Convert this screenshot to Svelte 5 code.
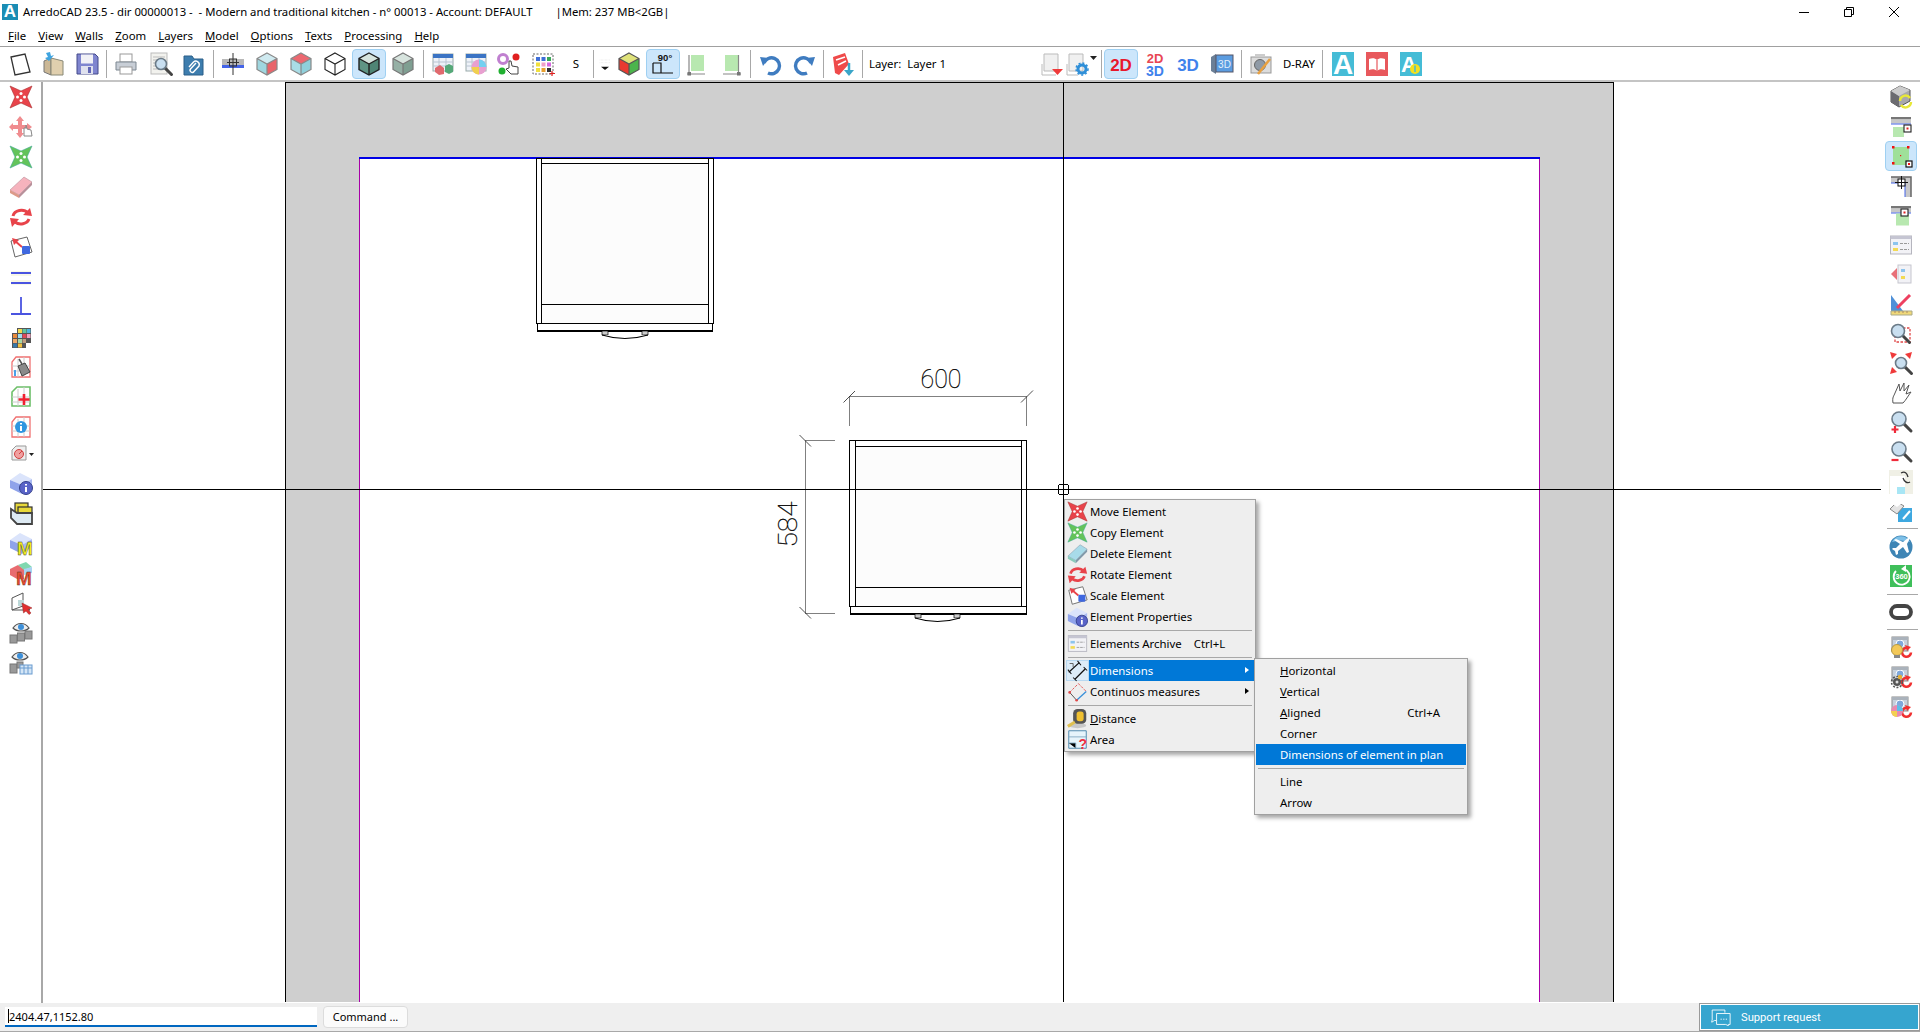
<script>
	// shared little drawings, icons are all on a 24x24 box
	const star = (c, e) =>
		`<path fill="${c}" stroke="${e}" stroke-width=".6" d="M1 1L12 6L23 1L18 12L23 23L12 18L1 23L6 12Z"/><g fill="#fff"><circle cx="12" cy="8.500" r="1.500"/><circle cx="12" cy="15.500" r="1.500"/><circle cx="8.500" cy="12" r="1.500"/><circle cx="15.500" cy="12" r="1.500"/></g>`;
	const cube = (t, l, r, e = '#666', w = 1) =>
		`<path fill="${t}" d="M12 1L22 6.500L12 12L2 6.500Z"/><path fill="${l}" d="M2 6.500L12 12V23L2 17.500Z"/><path fill="${r}" d="M22 6.500L12 12V23L22 17.500Z"/><path fill="none" stroke="${e}" stroke-width="${w}" d="M12 1L22 6.500V17.500L12 23L2 17.500V6.500ZM2 6.500L12 12L22 6.500M12 12V23"/>`;
	const isoBox = `<path fill="#dbe4fb" d="M1 9L11 2L23 8L13 14Z"/><path fill="#8fa3ea" d="M1 9L13 14V23L1 17Z"/><path fill="#a9b9f2" d="M23 8L13 14V23L23 16Z"/>`;
	const mag = (x = 10, y = 10, r = 7) =>
		`<path stroke="#444" stroke-width="3" stroke-linecap="round" d="M${x + r * 0.7} ${y + r * 0.7}L${x + r + 5} ${y + r + 5}"/><circle cx="${x}" cy="${y}" r="${r}" fill="#c9dff0" stroke="#6b7b88" stroke-width="1.600"/>`;
	const eraser = (a, b, c) =>
		`<path fill="${a}" stroke="${c}" stroke-width=".6" d="M1 15L15 2L23 7L10 20Z"/><path fill="${b}" d="M1 15L10 20V23L1 18Z"/><path fill="${c}" d="M10 20L23 7V10L10 23Z"/>`;
	const rotate = `<path fill="none" stroke="#e8434a" stroke-width="3" d="M4 11A8.500 7 0 0 1 19 8M20 14A8.500 7 0 0 1 6 17"/><path fill="#e8434a" d="M14 10L23 11L21 3ZM10 14L1 13L3 22Z"/>`;
	const scale = `<path fill="#fff" stroke="#666" d="M2 6L18 2L23 17L6 22Z"/><path stroke="#e8434a" stroke-width="2" d="M6 6L13 12"/><path fill="#e8434a" d="M3 3L10 5L5 10Z"/><rect x="13" y="11" width="8" height="8" fill="#3f68e0" rx="1"/>`;
	const sheet = (e) => `<path fill="#fff" stroke="${e}" stroke-width="1.300" d="M7 2H21V22H3V7Z"/><path stroke="#ccc" d="M3 11H21M3 16H21M9 4V22M15 2V22"/>`;
	const table = `<rect x="2" y="2" width="20" height="17" fill="#eef2f8" stroke="#9aa"/><rect x="2" y="2" width="20" height="4" fill="#3b74c4"/><path stroke="#b9c4d2" d="M2 10H22M2 14H22M8 6V19M15 6V19"/>`;
	const green = `<rect x="6" y="3" width="13" height="16" fill="#b8e8b0"/>`;
	const tile = (c, body) => `<rect x="1" y="0" width="22" height="24" fill="${c}"/>${body}`;
	const book = `<path fill="#fff" d="M4 7c3-1 6-1 8 1c2-2 5-2 8-1v11c-3-1-6-1-8 1c-2-2-5-2-8-1Z"/><path stroke="#e8585c" stroke-width="1.200" d="M12 8v11"/>`;
	const wall = `<rect x="2" y="3" width="20" height="2.500" fill="#777"/><rect x="2" y="5.500" width="20" height="4" fill="#c8c8c8"/><rect x="2" y="9.500" width="20" height="1" fill="#4464e8"/>`;
	const boxRefresh = `<rect x="3" y="2" width="16" height="14" fill="#c6d0dc" stroke="#8a8a8a"/><circle cx="11" cy="9" r="4" fill="#7fa8dc" stroke="#fff"/><rect x="3" y="2" width="16" height="3" fill="#aab2bb"/><path fill="none" stroke="#f03030" stroke-width="2.600" d="M22 17.500A4.500 4.500 0 1 1 19 13"/><path fill="#f03030" d="M16 10L22 12L18 16Z"/>`;
	const txt = (x, y, s, c, t, w = 700, extra = '') =>
		`<text x="${x}" y="${y}" font-size="${s}" fill="${c}" font-weight="${w}" font-family="Liberation Sans, sans-serif" text-anchor="middle" ${extra}>${t}</text>`;

	const icons = {
		move: star('#e8434a', '#a33'),
		moveHand: `<path fill="#ee8083" d="M11 1L15 6H13V10H18V8L23 12L18 16V14H13V18H15L11 23L7 18H9V14H4V16L0 12L4 8V10H9V6H7Z" opacity=".9"/><path fill="#fff" stroke="#888" d="M15 13V21L23 21L22 15L18 14L17 10V13Z"/>`,
		copy: star('#63c35a', '#4a9'),
		erase: eraser('#f6b3bd', '#d98', '#b8909a'),
		eraseBlue: eraser('#a8dbe9', '#8cb', '#7f98a8'),
		rotate,
		scale,
		parallel: `<rect x="2" y="6" width="20" height="5" fill="#f8f8e8"/><rect x="2" y="15" width="20" height="5" fill="#f8f8e8"/><path stroke="#4a54e0" stroke-width="1.800" d="M2 8H22M2 18H22"/>`,
		perp: `<path stroke="#4a54e0" stroke-width="1.800" d="M12 2V19M2 19H22"/>`,
		palette: `<path fill="#555" d="M8 3H22V18H17V23H3V8H8Z"/><rect x="9" y="4" width="4" height="4" fill="#f2d94e"/><rect x="13.500" y="4" width="4" height="4" fill="#62c4a0"/><rect x="18" y="4" width="3.500" height="4" fill="#4db4e0"/><rect x="4" y="9" width="4" height="4" fill="#e88a3c"/><rect x="9" y="9" width="4" height="4" fill="#9fdcf0"/><rect x="13.500" y="9" width="4" height="4" fill="#e04858"/><rect x="18" y="9" width="3.500" height="4" fill="#f0a0c0"/><rect x="4" y="14" width="4" height="4" fill="#f0a868"/><rect x="9" y="14" width="4" height="4" fill="#a8d8a8"/><rect x="13.500" y="14" width="3.500" height="4" fill="#c0a080"/><rect x="4" y="18.500" width="4" height="4" fill="#3878a8"/><rect x="9" y="18.500" width="4" height="4" fill="#f0c040"/>`,
		paint: `${sheet('#f07070')}<path fill="#8a8a8a" stroke="#444" d="M9 11L16 8L21 17L13 21Z"/><path stroke="#555" stroke-width="1.500" d="M13 9L10 4"/><path stroke="#4aa0e8" stroke-width="2" d="M6 15V21"/>`,
		addArea: `<path fill="#fff" stroke="#6cbf68" stroke-width="1.600" d="M8 2H21V21H3V7Z"/><path stroke="#ccc" d="M3 12H21M3 17H21M9 4V21M15 2V21"/><path stroke="#f02030" stroke-width="2.600" d="M15 9V20M9.500 14.500H20.500"/>`,
		infoArea: `${sheet('#f07070')}<circle cx="12" cy="12" r="6" fill="#2f96e0"/><path stroke="#fff" stroke-width="2" d="M12 11V16M12 8V9.500"/>`,
		stamp: `<path fill="#eee" stroke="#999" d="M7 3H17V17H3V7Z"/><circle cx="10" cy="11" r="4.500" fill="#f0a0a0" stroke="#d04040"/><path stroke="#d04040" d="M10 11L13 8"/><path fill="#222" d="M20 10H25L22.500 13Z"/>`,
		boxInfo: `${isoBox}<circle cx="17" cy="17" r="6.500" fill="#5964c8" stroke="#34408a"/><path stroke="#fff" stroke-width="2" d="M17 16V21M17 13V14.500"/>`,
		archive: `<rect x="6" y="2" width="13" height="10" fill="#e8d93a" stroke="#333" stroke-width="1.200"/><rect x="9" y="6" width="14" height="7" fill="#e8d93a" stroke="#333" stroke-width="1.200"/><path fill="#ddeaf3" stroke="#444" stroke-width="1.800" d="M8 12H23V23H8L2 17V8Z"/>`,
		boxM: `${isoBox}${txt(16, 24, 19, '#f0ec20', 'M', 800, 'stroke="#333" stroke-width=".4"')}`,
		multiM: `<path fill="#e86c70" d="M1 8L9 4L15 8V18H8L1 14Z"/><path fill="#7fd8b0" d="M9 4L17 1L23 6L15 9Z"/><path fill="#a9d3f2" d="M15 8L23 6V12L15 14Z"/>${txt(15, 24, 19, '#e8492c', 'M', 800, 'stroke="#333" stroke-width=".3"')}`,
		cursorBox: `<path fill="none" stroke="#555" d="M3 7L14 2V15L3 19ZM14 15L21 19H3"/><rect x="9" y="9" width="6" height="6" fill="#bcd8d8"/><path fill="#e03030" stroke="#922" stroke-width=".5" d="M13 12L23 17L19 18.500L22 22L20 23.500L17 20L14.500 22Z"/>`,
		eye1: `<path fill="#eee" stroke="#555" stroke-width="1.200" d="M4 7C8 1 16 1 20 7C16 11 8 11 4 7Z"/><circle cx="12" cy="6" r="3" fill="#3d8fd8"/><g fill="#999" stroke="#777"><rect x="1" y="14" width="7" height="8"/><rect x="8.500" y="12" width="7" height="8"/><rect x="16" y="10" width="7" height="8"/></g>`,
		eye2: `<path fill="#eee" stroke="#555" stroke-width="1.200" d="M3 6C7 0 15 0 19 6C15 10 7 10 3 6Z"/><circle cx="11" cy="5" r="3" fill="#3d8fd8"/><g fill="#999" stroke="#777"><rect x="1" y="13" width="7" height="9"/><rect x="8" y="11" width="6" height="6"/></g><rect x="11" y="14" width="12" height="9" fill="#d5e6f6" stroke="#6a9cd0"/><path stroke="#6a9cd0" d="M11 17H23M15 14V23M19 14V23"/>`,

		newDoc: `<path fill="#fff" stroke="#333" stroke-width="1.300" d="M3 5L17 2L22 20L7 23Z"/>`,
		open: `<path fill="#cbb896" stroke="#777" d="M3 9L10 6V23L3 20Z"/><path fill="#e0cfae" stroke="#887" d="M10 6L22 9V23L10 23Z"/><path fill="#3fa4e0" d="M8 9L4 6L7 5L5 1L9 0L10 4L13 3Z"/>`,
		save: `<path fill="#7f85cf" stroke="#454a8a" d="M2 2H20L23 5V22H2Z"/><rect x="6" y="2.500" width="12" height="9" fill="#f1f1f6"/><rect x="6" y="14" width="12" height="8" fill="#dfe1ee"/><rect x="13" y="15" width="3" height="6" fill="#6166b5"/>`,
		print: `<rect x="6" y="2" width="12" height="8" fill="#fff" stroke="#999"/><path fill="#c8ced6" stroke="#7d8791" d="M2 10H22V18H2Z"/><rect x="6" y="15" width="12" height="7" fill="#fff" stroke="#999"/>`,
		preview: `<rect x="3" y="1" width="16" height="21" fill="#f2f2ee" stroke="#bbb"/><path stroke="#bbb" d="M5 5H17M5 8H17M5 11H12M5 14H11M5 17H11"/>${mag(13, 12, 5.500)}`,
		attach: `<path fill="#3d7dae" stroke="#2b5f88" d="M3 4H11L13 7H22V23H3Z"/><path fill="none" stroke="#fff" stroke-width="1.400" d="M15 11L9.500 17A2 2 0 0 0 13 19.500L18 14A3.500 3.500 0 0 0 12.500 10L8 15"/>`,
		wallSnap: `<rect x="1" y="7" width="22" height="6" fill="#b8b8b8"/><rect x="1" y="13" width="22" height="3" fill="#4464e8"/><path stroke="#333" d="M12 1V23M6 10.500H18"/><rect x="8.500" y="7" width="7" height="7" fill="none" stroke="#333"/>`,
		cubeRed: cube('#cfeaf0', '#9fd6df', '#e8646a', '#888', 1.200),
		cubeRedTop: cube('#ec6870', '#a9dde6', '#8fd0db', '#888', 1.200),
		cubeWire: cube('#fff', '#fff', '#fff', '#222', 1.100),
		cubeGreen: cube('#d7e4de', '#5f9484', '#4f8575', '#222', 1.400),
		cubeGreen2: cube('#d7e4de', '#95b0a5', '#7f9f92', '#777', 1.200),
		table1: `${table}<path fill="#e0696e" d="M4 16L9 13L13 16V22L8 23L4 20Z"/><path fill="#55a878" d="M14 14L18 12L22 14V20L18 22L14 20Z"/>`,
		tableColor: `${table}<circle cx="15" cy="15" r="7.500" fill="#e8a0d0"/><path fill="#74d0f0" d="M15 15V7.500A7.500 7.500 0 0 1 22.500 15Z"/><path fill="#f0d050" d="M15 15H7.500A7.500 7.500 0 0 0 15 22.500Z"/>`,
		hand: `<circle cx="6" cy="7" r="4.500" fill="none" stroke="#c080d0" stroke-width="3"/><circle cx="19" cy="5" r="3.500" fill="#e02020"/><circle cx="5" cy="19" r="3.500" fill="#20b030"/><path fill="#fff" stroke="#444" d="M12 9L14 9L15 14L21 15L21 22H14L9 17L12 16Z"/>`,
		dots: `<rect x="2" y="2" width="20" height="20" fill="none" stroke="#666" stroke-dasharray="2 1.500"/><g><rect x="5" y="5" width="4" height="4" fill="#3f6fd8"/><rect x="10.500" y="5" width="4" height="4" fill="#3f6fd8"/><rect x="16" y="5" width="4" height="4" fill="#38a858"/><rect x="5" y="10.500" width="4" height="4" fill="#f0e040"/><rect x="10.500" y="10.500" width="4" height="4" fill="#f0a0c8"/><rect x="16" y="10.500" width="4" height="4" fill="#d868e0"/><rect x="5" y="16" width="4" height="4" fill="#f0e040"/><rect x="10.500" y="16" width="4" height="4" fill="#e8a030"/><rect x="16" y="16" width="4" height="4" fill="#333"/></g><path stroke="#e02020" stroke-width="1.200" d="M21 19V24M18.500 21.500H24"/>`,
		sLetter: `<text x="12" y="16" font-size="11.500" text-anchor="middle" font-family="Noto Sans, sans-serif" fill="#000">S</text>`,
		drop: `<path stroke="#ddd" stroke-dasharray="1 1" d="M4 6H20M4 10H20"/><path fill="#111" d="M6 16H18L12 21Z"/>`,
		cube3: cube('#dfe27a', '#e83a30', '#4cb54c', '#555', 1.200),
		angle: `${txt(14, 9, 9.500, '#111', '90°', 800)}<path fill="none" stroke="#111" stroke-width="1.200" d="M2 11H10V21M2 11V21H22"/>`,
		greenL: `${green}<path stroke="#888" stroke-width="1.200" d="M2 22H20M4 3V22"/><rect x="2.500" y="20" width="3.500" height="3.500" fill="#777"/>`,
		greenR: `${green}<path stroke="#888" stroke-width="1.200" d="M4 22H22M19.500 3V22"/><rect x="18" y="20" width="3.500" height="3.500" fill="#777"/>`,
		undo: `<path fill="none" stroke="#3f7cc0" stroke-width="3.400" d="M5 11A8 8 0 1 1 9 21"/><path fill="#3f7cc0" d="M1 5L10 6L4 14Z"/>`,
		redo: `<path fill="none" stroke="#3f7cc0" stroke-width="3.400" d="M19 11A8 8 0 1 0 15 21"/><path fill="#3f7cc0" d="M23 5L14 6L20 14Z"/>`,
		redExport: `<path fill="#ef4a4a" d="M2 5L14 1L18 12L8 23L4 21Z"/><path stroke="#fff" stroke-width="1.500" d="M5 8L14 5M7 13L15 9"/><path stroke="#3aa5c8" stroke-width="2.500" d="M18 11V19"/><path fill="#3aa5c8" d="M13 18H23L18 24Z"/>`,
		layerA: `<path fill="#f0f0f0" stroke="#bbb" d="M3 2H17V19H3Z"/><path fill="none" stroke="#bbb" d="M1 12V23H15"/><path fill="#ef3a3a" d="M11 17H22L16.500 23Z"/>`,
		layerB: `<path fill="#f0f0f0" stroke="#bbb" d="M3 2H17V19H3Z"/><path fill="none" stroke="#bbb" d="M1 12V23H12"/><circle cx="16" cy="17" r="4" fill="none" stroke="#2f8fd8" stroke-width="3"/><circle cx="16" cy="17" r="6" fill="none" stroke="#2f8fd8" stroke-width="1.500" stroke-dasharray="2 2"/>`,
		caret: `<path fill="#222" d="M8 4H15L11.500 8Z"/>`,
		d2: txt(12, 18.500, 17, '#e8182c', '2D', 700),
		d23: `${txt(12, 11, 13, '#e84654', '2D', 700)}${txt(12, 23.500, 14, '#3f82ec', '3D', 700)}`,
		d3: txt(12, 18.500, 17, '#3f82ec', '3D', 700),
		screen3: `<path fill="#6b7f96" d="M1 5L6 2V22L1 19Z"/><rect x="6" y="3" width="17" height="17" fill="#5b9ce0" stroke="#556"/>${txt(14.500, 16, 10, '#e4f0fb', '3D', 400)}`,
		camera: `<rect x="2" y="5" width="20" height="16" fill="#dcdcdc" stroke="#999"/><rect x="6" y="2" width="10" height="3" fill="#ccc"/><circle cx="11" cy="13" r="5.500" fill="#8f9aa6" stroke="#666"/><path stroke="#e8a040" stroke-width="2.500" d="M9 22L21 7"/>`,
		logoA: tile('#45bcd6', txt(12, 22, 28, '#fff', 'A', 800)),
		logoBook: tile('#e8585c', book),
		logoUp: tile('#45bcd6', `${txt(10, 20, 22, '#fff', 'A', 800)}<circle cx="16" cy="17" r="5" fill="#f3e020"/><path stroke="#45bcd6" stroke-width="1.500" d="M16 13.500V20"/>`),

		cubeSync: `<path fill="#a8a8ac" stroke="#555" d="M11 1L21 5V16L10 22L2 17V6Z"/><path fill="#6b6b70" d="M2 6L10 11V22L2 17Z"/><path fill="#ccc" d="M11 1L21 5L10 11L2 6Z"/><path fill="none" stroke="#e8e838" stroke-width="2.500" d="M11 16A5.500 5.500 0 0 1 21 13M22 17A5.500 5.500 0 0 1 12 20"/>`,
		wallBox1: `${wall}<rect x="4" y="13" width="11" height="10" fill="#b8e8b0"/><rect x="15" y="11" width="7" height="7" fill="#fff" stroke="#222" stroke-width="1.100"/><rect x="17.500" y="13.500" width="2" height="2" fill="#e02020"/>`,
		boxSel: `<rect x="4" y="3" width="16" height="18" fill="#9fe099"/><g fill="#f01010"><rect x="3" y="2" width="2.500" height="2.500"/><rect x="18" y="2" width="2.500" height="2.500"/><rect x="3" y="18" width="2.500" height="2.500"/><rect x="11" y="11" width="1.200" height="1.200"/></g><rect x="17" y="17" width="6" height="6" fill="#fff" stroke="#111" stroke-width="1.200"/><rect x="19" y="19" width="2" height="2" fill="#f01010"/>`,
		wallCorner: `<path fill="#c8c8c8" d="M2 3H22V23H16V9H2Z"/><path fill="none" stroke="#666" stroke-width="1.500" d="M2 3H22V23"/><path fill="none" stroke="#4464e8" d="M2 9H16V23"/><rect x="9" y="5" width="7" height="7" fill="#fff" stroke="#111"/><path stroke="#111" d="M12.500 2V15M6 8.500H19"/>`,
		wallBox2: `${wall}<rect x="7" y="10.500" width="13" height="12" fill="#b8e8b0"/><rect x="12" y="6" width="7" height="7" fill="#fff" stroke="#222" stroke-width="1.100"/><rect x="14.500" y="8.500" width="2" height="2" fill="#e02020"/>`,
		list: `<rect x="1.500" y="3" width="21" height="18" fill="#f2f2f6" stroke="#b5b5be"/><rect x="1.500" y="3" width="21" height="3" fill="#c5c5d2"/><rect x="4" y="9" width="5" height="3" fill="#8cc4ee"/><rect x="4" y="15" width="5" height="3" fill="#f3da55"/><path stroke="#999" stroke-dasharray="3 1" d="M11 10.500H20M11 16.500H20"/>`,
		listArrow: `<rect x="9" y="3" width="13" height="18" fill="#f2f2f6" stroke="#c5c5ce"/><rect x="12" y="7" width="4" height="3" fill="#8cc4ee"/><rect x="12" y="14" width="4" height="3" fill="#f3da55"/><path fill="#e87078" d="M8 6V18L2 12Z"/>`,
		ruler: `<path fill="#4f90d8" d="M2 3L14 19H2Z"/><path fill="#f0d878" stroke="#aa8" d="M2 19H23V23H2Z"/><path stroke="#a86" d="M6 19V21M10 19V21M14 19V21M18 19V21"/><path stroke="#ee4060" stroke-width="3" d="M8 16L21 3"/>`,
		zoomWin: `<rect x="6" y="6" width="15" height="14" fill="none" stroke="#e04848" stroke-dasharray="2.500 1.500" stroke-width="1.300"/>${mag(9, 9, 6.500)}`,
		zoomFit: `${mag(12, 12, 5.500)}<g fill="#ef3a3a"><path d="M1 1L8 3L3 8Z"/><path d="M23 1L16 3L21 8Z"/><path d="M1 23L3 16L8 21Z"/></g>`,
		handOut: `<path fill="#fff" stroke="#555" d="M4 22C3 16 5 15 6 12L10 3L11 10L15 2L15 10L20 4L17 13L22 11C19 15 17 19 14 22Z"/>`,
		zoomIn: `${mag(10, 9, 7)}<path stroke="#ef2a3a" stroke-width="2.200" d="M6 16V23M2.500 19.500H9.500"/>`,
		zoomOut: `${mag(10, 9, 7)}<path stroke="#ef2a3a" stroke-width="2.200" d="M2.500 20H9.500"/>`,
		pageFlip: `<rect x="0" y="0" width="24" height="24" fill="#f0f0e6"/><path fill="#fff" d="M1 6H16V24H1Z"/><rect x="8" y="17" width="8" height="7" fill="#a8e6f5"/><path fill="none" stroke="#333" stroke-width="1.300" d="M12 3C16 1 18 3 19 7M21 12C18 14 15 11 14 8"/>`,
		printEdit: `<rect x="9" y="9" width="14" height="14" fill="#3ea8e0"/><path fill="#e4e4e4" stroke="#888" d="M1 10L8 3L15 7L8 15Z"/><path fill="#fff" d="M4 5L9 1L13 4L8 8Z"/><path stroke="#fff" stroke-width="2" d="M14 20L21 12"/>`,
		plane: `<circle cx="12" cy="12" r="11.500" fill="#3e85b5"/><path fill="#7ec0e8" d="M3 7A10 10 0 0 1 21 7C15 5 9 5 3 7Z"/><path fill="#fff" d="M21 3L18 9L20 17L18 18L14 12L9 16L9 19L7 20L6 16L3 14L4 13L7 13L11 9L5 5L7 4L14 7L19 3Z"/>`,
		p360: `<rect x="1" y="1" width="22" height="22" fill="#3fbf5a"/><path fill="none" stroke="#fff" stroke-width="1.800" d="M7 7A8 8 0 1 0 15 5"/><path fill="#fff" d="M12 5L17 1V8Z"/>${txt(12.500, 15, 7.500, '#fff', '360', 800)}`,
		oval: `<rect x="2" y="6" width="20" height="12" rx="6" fill="none" stroke="#444" stroke-width="3.800"/>`,
		bulb: `${boxRefresh}<circle cx="8" cy="15" r="5.500" fill="#f3c858" stroke="#b89a40"/><rect x="5" y="20" width="6" height="3" fill="#888"/>`,
		gear: `${boxRefresh}<circle cx="8" cy="17" r="4" fill="#555"/><circle cx="8" cy="17" r="5.500" fill="none" stroke="#555" stroke-width="1.500" stroke-dasharray="2 1.500"/><circle cx="8" cy="17" r="1.500" fill="#ddd"/><circle cx="11" cy="12" r="2.200" fill="#e8b030"/>`,
		wheel: `${boxRefresh}<circle cx="8" cy="16" r="6" fill="#e88ab0"/><path fill="#5cc0e8" d="M8 16V10A6 6 0 0 1 14 16Z"/><path fill="#f3d050" d="M8 16H2A6 6 0 0 0 8 22Z"/>`,

		dims: `<path stroke="#111" stroke-width="1.400" d="M2 14L14 3M9 22L21 10"/><path stroke="#111" stroke-width="1.200" d="M1 11L5 16M12 1L16 6M7 20L11 24M19 8L23 12"/><path fill="none" stroke="#555" d="M3 4L7 4L7 8"/>`,
		cont: `<path fill="none" stroke="#e04848" stroke-dasharray="3 1.500" d="M3 13L13 3M13 3L22 12"/><path stroke="#444" d="M3 13L11 22"/><path fill="none" stroke="#3a90d8" stroke-width="1.500" d="M11 22L22 12"/><circle cx="3" cy="13" r="1.500" fill="#e04848"/><circle cx="11" cy="22" r="1.500" fill="#e04848"/>`,
		tape: `<ellipse cx="12" cy="20" rx="10" ry="3" fill="#c8c8c8"/><rect x="7" y="1" width="15" height="17" rx="5" fill="#555"/><rect x="11" y="4" width="8" height="11" rx="3" fill="#f0c030"/><path stroke="#e0c050" stroke-width="3.500" d="M1 21L9 16"/>`,
		areaQ: `<path fill="#e6f4fb" stroke="#3f7fa8" d="M2 2H22V22H2Z"/><path stroke="#7fa8c0" d="M2 9H22M2 16H10V22"/>${txt(18, 23, 16, '#ee3040', '?', 800)}`
	};

	// toolbar rows, w = slot width
	const toolbar = [
		{ w: 33.5, items: ['newDoc', 'open', 'save'] },
		{ w: 33.5, items: ['print', 'preview', 'attach'] },
		{ w: 34, items: ['wallSnap', 'cubeRed', 'cubeRedTop', 'cubeWire', { i: 'cubeGreen', on: true }, 'cubeGreen2'] },
		{ w: 33.4, items: ['table1', 'tableColor', 'hand', 'dots', 'sLetter'] }
	];
	const toolbar2 = [
		{ w: 34, items: ['cube3', { i: 'angle', on: true }, 'greenL', 'greenR'] },
		{ w: 33.5, items: ['undo', 'redo'] },
		{ w: 33, items: ['redExport'] }
	];
	const toolbar3 = [
		{ w: 33.5, items: [{ i: 'd2', on: true }, 'd23', 'd3', 'screen3'] },
		{ w: 33.5, items: ['camera'] }
	];
	const logos = ['logoA', 'logoBook', 'logoUp'];

	const leftTools = ['move', 'moveHand', 'copy', 'erase', 'rotate', 'scale', 'parallel', 'perp', 'palette', 'paint', 'addArea', 'infoArea', 'stamp', 'boxInfo', 'archive', 'boxM', 'multiM', 'cursorBox', 'eye1', 'eye2'];
	const right1 = ['cubeSync', 'wallBox1', 'boxSel', 'wallCorner', 'wallBox2', 'list', 'listArrow', 'ruler', 'zoomWin', 'zoomFit', 'handOut', 'zoomIn', 'zoomOut', 'pageFlip', 'printEdit'];
	const right2 = ['plane', 'p360'];
	const right3 = ['oval'];
	const right4 = ['bulb', 'gear', 'wheel'];

	const menus = [
		['F', 'ile'], ['V', 'iew'], ['W', 'alls'], ['Z', 'oom'], ['L', 'ayers'], ['M', 'odel'], ['O', 'ptions'], ['T', 'exts'], ['P', 'rocessing'], ['H', 'elp']
	];

	const ctxMenu = [
		[{ i: 'move', t: 'Move Element' }, { i: 'copy', t: 'Copy Element' }, { i: 'eraseBlue', t: 'Delete Element' }, { i: 'rotate', t: 'Rotate Element' }, { i: 'scale', t: 'Scale Element' }, { i: 'boxInfo', t: 'Element Properties' }],
		[{ i: 'list', t: 'Elements Archive', key: 'Ctrl+L' }],
		[{ i: 'dims', t: 'Dimensions', sub: true, on: true }, { i: 'cont', t: 'Continuos measures', sub: true }],
		[{ i: 'tape', u: 'D', t: 'istance' }, { i: 'areaQ', t: 'Area' }]
	];
	const subMenu = [
		[{ u: 'H', t: 'orizontal' }, { u: 'V', t: 'ertical' }, { u: 'A', t: 'ligned', key: 'Ctrl+A' }, { t: 'Corner' }, { t: 'Dimensions of element in plan', on: true }],
		[{ t: 'Line' }, { t: 'Arrow' }]
	];

	// CAD drawing, coordinates are page pixels
	const cabinets = [
		{ x1: 536, x2: 713, s1: 541, s2: 708, top: 158, t2: 163, b1: 304, b2: 323, fx1: 537, fx2: 712, fy: 330, hx1: 602, hx2: 648 },
		{ x1: 849, x2: 1026, s1: 855, s2: 1021, top: 440, t2: 446, b1: 587, b2: 606, fx1: 850, fx2: 1026, fy: 613, hx1: 915, hx2: 960 }
	];
</script>

{#snippet icon(name)}
	<svg class="ico" viewBox="0 0 24 24" aria-hidden="true">{@html icons[name]}</svg>
{/snippet}

{#snippet tbGroups(groups)}
	{#each groups as g, n}
		{#if n > 0}<span class="vsep"></span>{/if}
		{#each g.items as it}
			<span class="slot" class:on={it.on} style="width: {g.w}px">
				{@render icon(it.i ?? it)}
			</span>
		{/each}
	{/each}
{/snippet}

{#snippet menuRows(groups, withIcons)}
	{#each groups as rows, n}
		{#if n > 0}<div class="msep"><span></span></div>{/if}
		{#each rows as r}
			<div class="mrow">
				{#if withIcons}<span class="micon" class:hot={r.on}>{@render icon(r.i)}</span>{/if}
				<span class="mtext" class:on={r.on}>
					<span class="mlabel">{#if r.u}<u>{r.u}</u>{/if}{r.t}</span>
					{#if r.key}<span class="mkey" class:right={!withIcons}>{r.key}</span>{/if}
					{#if r.sub}<span class="marrow" class:white={r.on}></span>{/if}
				</span>
			</div>
		{/each}
	{/each}
{/snippet}

<div class="app">
	<header class="titlebar">
		<span class="logo">A</span>
		<span class="title">ArredoCAD 23.5 - dir 00000013 -&nbsp; - Modern and traditional kitchen - n° 00013 - Account: DEFAULT</span>
		<span class="mem">|Mem: 237 MB&lt;2GB|</span>
		<div class="winctl">
			<svg viewBox="0 0 10 10"><path d="M0 5.500H10" stroke="#000" /></svg>
			<svg viewBox="0 0 10 10"><path d="M.5 2.500H7.500V9.500H.5ZM2.500 2.500V.5H9.500V7.500H7.500" fill="none" stroke="#000" /></svg>
			<svg viewBox="0 0 10 10"><path d="M0 0L10 10M10 0L0 10" stroke="#000" /></svg>
		</div>
	</header>

	<nav class="menubar">
		{#each menus as m}
			<span><u>{m[0]}</u>{m[1]}</span>
		{/each}
	</nav>

	<div class="toolbar">
		{@render tbGroups(toolbar)}
		<span class="vsep tight"></span>
		<span class="slot narrow">{@render icon('drop')}</span>
		{@render tbGroups(toolbar2)}
		<span class="vsep"></span>
		<span class="layer">Layer:&nbsp; Layer 1</span>
		<span class="slot small">{@render icon('layerA')}</span>
		<span class="slot small">{@render icon('layerB')}</span>
		<span class="slot tiny">{@render icon('caret')}</span>
		<span class="vsep"></span>
		{@render tbGroups(toolbar3)}
		<span class="dray">D-RAY</span>
		<span class="vsep"></span>
		{#each logos as l}
			<span class="slot logo-slot">{@render icon(l)}</span>
		{/each}
	</div>

	<main class="main">
		<aside class="lefttools">
			{#each leftTools as t}
				<span class="ltool" class:short={t === 'stamp'}>{@render icon(t)}</span>
			{/each}
		</aside>

		<section class="canvas">
			<svg class="drawing" viewBox="43 82 1838 920" aria-label="Plan view">
				<g shape-rendering="crispEdges">
					<rect x="285.500" y="82.500" width="1328" height="930" fill="#cfcfcf" stroke="#000" />
					<rect x="359" y="158" width="1180" height="860" fill="#fff" />
					<path d="M359.500 158V1002M1539.500 158V1002" stroke="#a800a8" />
					<rect x="359" y="157" width="1181" height="2" fill="#0000e6" />
				</g>

				{#each cabinets as c}
					<g shape-rendering="crispEdges" fill="none" stroke="#000">
						<rect x={c.s1} y={c.t2} width={c.s2 - c.s1} height={c.b2 - c.t2} fill="#fcfcfc" />
						<rect x={c.x1 + 0.5} y={c.top + 0.5} width={c.x2 - c.x1} height={c.b2 - c.top} />
						<path d="M{c.s1 + 0.5} {c.top}V{c.b2}M{c.s2 + 0.5} {c.top}V{c.b2}M{c.s1} {c.t2 + 0.5}H{c.s2}M{c.s1} {c.b1 + 0.5}H{c.s2}" />
						<rect x={c.fx1 + 0.5} y={c.b2 + 0.5} width={c.fx2 - c.fx1} height={c.fy - c.b2} fill="#fff" />
						<path d="M{c.fx1} {c.fy + 1}H{c.fx2 + 1}" />
					</g>
					<path d="M{c.hx1} {c.fy + 1}V{c.fy + 5}H{c.hx1 + 6}V{c.fy + 1}ZM{c.hx2} {c.fy + 1}V{c.fy + 5}H{c.hx2 - 6}V{c.fy + 1}Z" fill="#ccc" stroke="#000" stroke-width=".7" />
					<path d="M{c.hx1} {c.fy + 5}Q{(c.hx1 + c.hx2) / 2} {c.fy + 12} {c.hx2} {c.fy + 5}" fill="#fff" stroke="#000" stroke-width="1.100" />
				{/each}

				<g fill="none" stroke="#808080" shape-rendering="crispEdges">
					<path d="M849.500 396.500H1027M849.500 396V426M1026.500 396V426" />
					<path d="M805.500 440V613.500M805 440.500H835M805 613.500H835" />
				</g>
				<path d="M843.500 402.500L855 391M1021 402.500L1033 390.500M799.500 435L811 446.500M799.500 607L811 618.500" stroke="#222" stroke-width=".8" />
				<text class="dim" x="920.500" y="388" textLength="41" lengthAdjust="spacingAndGlyphs">600</text>
				<text class="dim" transform="translate(796.500 547.500) rotate(-90)" x="0" y="0" textLength="46" lengthAdjust="spacingAndGlyphs">584</text>

				<g shape-rendering="crispEdges" stroke="#000">
					<path d="M43 489.500H1881M1063.500 82V1002" />
					<rect x="1058.500" y="484.500" width="10" height="10" rx="2" fill="#fff" />
					<path d="M1058 489.500H1069M1063.500 484V495" />
				</g>
			</svg>

			<div class="ctx">
				<div class="popup main-pop">{@render menuRows(ctxMenu, true)}</div>
				<div class="popup sub-pop">{@render menuRows(subMenu, false)}</div>
			</div>
		</section>

		<aside class="righttools">
			<div class="rgroup">
				{#each right1 as t}
					<span class="rtool" class:on={t === 'boxSel'}>{@render icon(t)}</span>
				{/each}
			</div>
			<div class="rsep"></div>
			<div class="rgroup">
				{#each right2 as t}
					<span class="rtool">{@render icon(t)}</span>
				{/each}
			</div>
			<div class="rsep"></div>
			<div class="rgroup">
				{#each right3 as t}
					<span class="rtool">{@render icon(t)}</span>
				{/each}
			</div>
			<div class="rsep"></div>
			<div class="rgroup">
				{#each right4 as t}
					<span class="rtool">{@render icon(t)}</span>
				{/each}
			</div>
		</aside>
	</main>

	<footer class="statusbar">
		<span class="cmdinput"><i class="caretbar"></i>2404.47,1152.80</span>
		<button class="cmdbtn">Command ...</button>
		<div class="support">
			<svg viewBox="0 0 24 20" aria-hidden="true">
				<path d="M2.500 14V2H17V5M2 14L2 16L5 14H7" fill="none" stroke="#fff" />
				<path d="M7.500 6H23V18.500H21V20L18 18.500H7.500Z" fill="none" stroke="#fff" />
				<path d="M12 12.500H13.500M15 12.500H16.500M18 12.500H19.500" stroke="#fff" />
			</svg>
			<span>Support request</span>
		</div>
	</footer>
</div>

<style>
	:global(body) {
		margin: 0;
		background: #fff;
		overflow: hidden;
	}

	.app {
		display: flex;
		flex-direction: column;
		width: 1920px;
		height: 1032px;
		font-family: 'Noto Sans', 'Liberation Sans', sans-serif;
		font-size: 11.400px;
		color: #000;
		overflow: hidden;
	}

	.ico {
		display: block;
		width: 24px;
		height: 24px;
		overflow: visible;
	}

	.titlebar {
		display: flex;
		align-items: center;
		height: 23px;
		padding-left: 2px;
		flex: none;
		font-size: 11.300px;
	}

	.logo {
		width: 16px;
		height: 16px;
		margin-right: 5px;
		background: #1a8db4;
		color: #fff;
		font: 700 17px/16px 'Liberation Sans', sans-serif;
		text-align: center;
	}

	.mem {
		margin-left: 23px;
	}

	.winctl {
		display: flex;
		gap: 35px;
		margin-left: auto;
		margin-right: 21px;
	}

	.winctl svg {
		width: 10px;
		height: 10px;
		overflow: visible;
	}

	.menubar {
		display: flex;
		align-items: center;
		gap: 12px;
		height: 21px;
		padding: 2px 0 0 8px;
		flex: none;
		border-bottom: 1px solid #a0a0a0;
	}

	.toolbar {
		display: flex;
		align-items: center;
		height: 33px;
		padding-left: 3px;
		flex: none;
		border-bottom: 2px solid #c4c4c4;
	}

	.slot {
		display: flex;
		align-items: center;
		justify-content: center;
		width: 33.500px;
		height: 30px;
		flex: none;
		box-sizing: border-box;
		border: 1px solid transparent;
		border-radius: 4px;
	}

	.slot.on {
		background: #cce6fb;
		border-color: #9fd0f2;
	}

	.slot.narrow {
		width: 13px;
	}

	.slot.narrow .ico {
		flex: none;
		width: 16px;
		height: 16px;
	}

	.slot.small {
		width: 25px;
	}

	.slot.tiny {
		width: 8px;
	}

	.slot.tiny .ico {
		flex: none;
	}

	.slot.logo-slot {
		width: 34px;
	}

	.dray {
		width: 42px;
		flex: none;
		text-align: center;
	}

	.vsep {
		width: 1px;
		height: 28px;
		margin: 0 2.500px;
		flex: none;
		background: #a8a8a8;
	}

	.vsep.tight {
		margin: 0 5px 0 0;
	}

	.layer {
		width: 174.500px;
		padding-left: 3px;
		flex: none;
		box-sizing: border-box;
		white-space: pre;
	}

	.main {
		display: flex;
		flex: 1;
		min-height: 0;
	}

	.lefttools {
		display: flex;
		flex-direction: column;
		width: 41px;
		flex: none;
		border-right: 2px solid #a8a8a8;
	}

	.ltool {
		display: flex;
		align-items: center;
		justify-content: center;
		height: 30px;
		flex: none;
	}

	.ltool.short {
		height: 26px;
	}

	.canvas {
		position: relative;
		width: 1838px;
		flex: none;
		overflow: hidden;
	}

	.drawing {
		display: block;
		width: 1838px;
		height: 920px;
	}

	.dim {
		font-family: Roboto, 'Liberation Sans', sans-serif;
		font-size: 26px;
		font-weight: 100;
		fill: #000;
		stroke: #000;
		stroke-width: 0.25;
	}

	.ctx {
		position: absolute;
		inset: 0;
		pointer-events: none;
	}

	.popup {
		position: absolute;
		box-sizing: border-box;
		background: #eee;
		border: 1px solid #a0a0a0;
		box-shadow: 3px 3px 4px rgba(0, 0, 0, 0.35);
		padding: 1px;
	}

	.main-pop {
		left: 1021px;
		top: 417px;
		width: 192px;
	}

	.sub-pop {
		left: 1211px;
		top: 576px;
		width: 214px;
	}

	.mrow {
		display: flex;
		height: 21px;
	}

	.micon {
		display: flex;
		align-items: center;
		justify-content: center;
		width: 23px;
		flex: none;
		box-sizing: border-box;
		border: 1px solid transparent;
	}

	.micon.hot {
		background: #dcecf8;
		border-color: #b8d8f0;
	}

	.micon .ico {
		width: 21px;
		height: 21px;
		flex: none;
	}

	.mtext {
		display: flex;
		align-items: center;
		flex: 1;
		min-width: 0;
		padding-left: 1px;
		position: relative;
		white-space: nowrap;
	}

	.sub-pop .mtext {
		padding: 0 26px 0 24px;
	}

	.mtext.on {
		background: #0078d7;
		color: #fff;
	}

	.mkey {
		margin-left: 12px;
	}

	.mkey.right {
		margin-left: auto;
	}

	.marrow {
		position: absolute;
		right: 5px;
		top: 7px;
		border-left: 4px solid #000;
		border-top: 3.500px solid transparent;
		border-bottom: 3.500px solid transparent;
	}

	.marrow.white {
		border-left-color: #fff;
	}

	.msep {
		display: flex;
		align-items: center;
		height: 6px;
		padding: 0 2px;
	}

	.msep span {
		display: block;
		flex: 1;
		height: 1px;
		background: #a8a8a8;
	}

	.righttools {
		display: flex;
		flex-direction: column;
		flex: 1;
	}

	.rtool {
		display: flex;
		align-items: center;
		justify-content: center;
		height: 29.600px;
		box-sizing: border-box;
		margin: 0 3px 0 4px;
		border: 1px solid transparent;
		border-radius: 4px;
	}

	.rtool.on {
		background: #cce6fb;
		border-color: #9fd0f2;
	}

	.rsep {
		height: 1px;
		margin: 2.500px 2px 2.500px 6px;
		background: #a8a8a8;
		flex: none;
	}

	.statusbar {
		display: flex;
		align-items: center;
		gap: 6px;
		height: 29px;
		flex: none;
		padding-left: 5px;
		box-sizing: border-box;
		background: #efefef;
		border-bottom: 1px solid #a8a8a8;
	}

	.cmdinput {
		display: flex;
		align-items: center;
		width: 312px;
		height: 20px;
		padding-left: 3px;
		box-sizing: border-box;
		background: #fff;
		border-bottom: 2px solid #0067c0;
		font-size: 11px;
	}

	.caretbar {
		width: 1px;
		height: 14px;
		background: #000;
	}

	.cmdbtn {
		width: 85px;
		height: 22px;
		padding: 0 0 2px;
		background: #fbfbfb;
		border: 1px solid #dcdcdc;
		border-radius: 4px;
		font: inherit;
		font-size: 11px;
		color: #000;
	}

	.support {
		display: flex;
		align-items: center;
		margin-left: auto;
		width: 221px;
		height: 28px;
		padding-left: 10px;
		box-sizing: border-box;
		background: #36a5cf;
		border: 1px solid #9a9a9a;
		box-shadow: inset 0 0 0 1px #fff;
		color: #fff;
		font-family: Roboto, 'Noto Sans', sans-serif;
		font-size: 11.200px;
	}

	.support svg {
		width: 21px;
		height: 18px;
		margin-right: 10px;
	}
</style>
